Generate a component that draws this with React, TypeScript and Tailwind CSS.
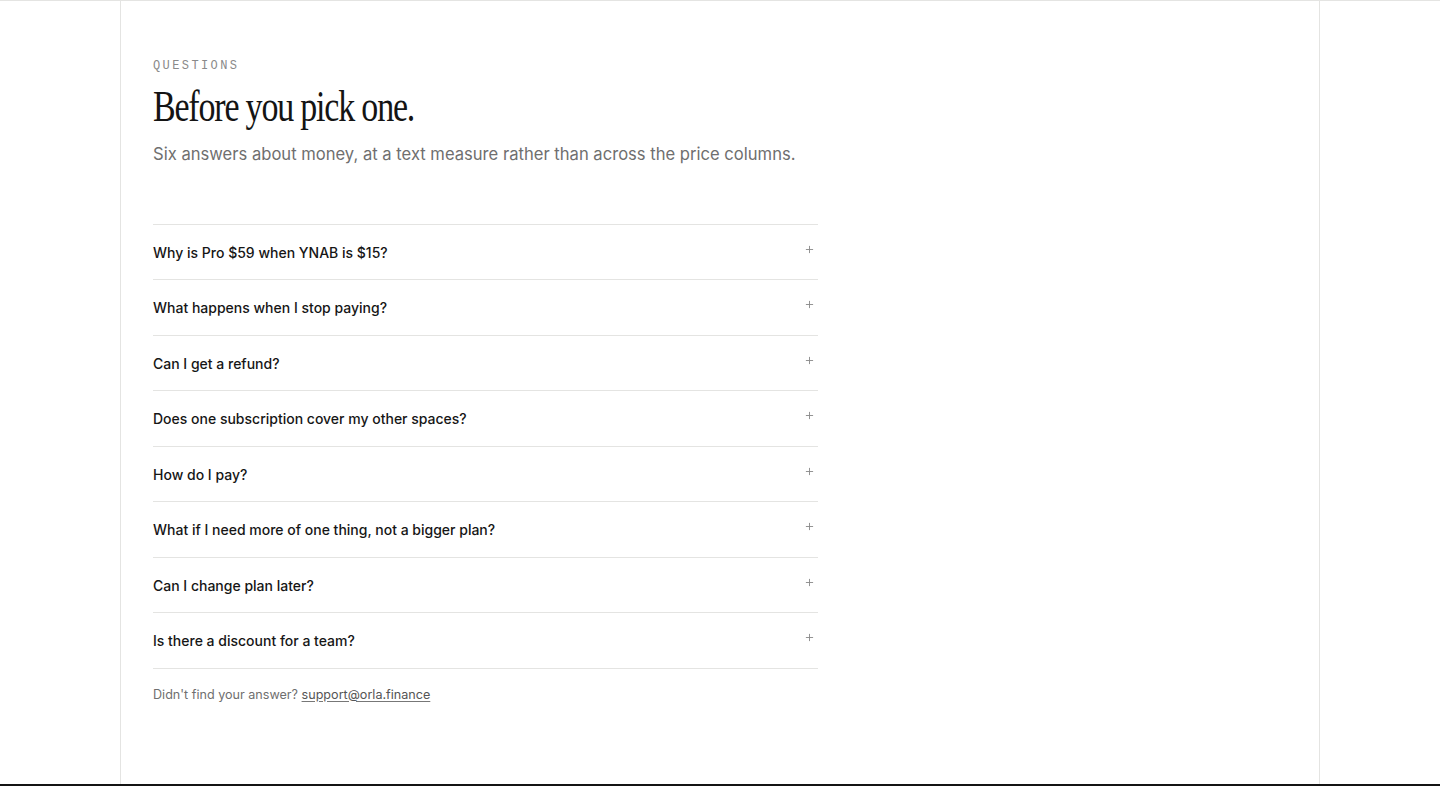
import { Plus } from "lucide-react";

const questions = [
  "Why is Pro $59 when YNAB is $15?",
  "What happens when I stop paying?",
  "Can I get a refund?",
  "Does one subscription cover my other spaces?",
  "How do I pay?",
  "What if I need more of one thing, not a bigger plan?",
  "Can I change plan later?",
  "Is there a discount for a team?",
];

const sans = "font-['Inter','Noto_Sans',sans-serif]";

const FaqRow = ({ q }: { q: string }) => (
  <li className="border-b border-[#e4e4e2]">
    <button className="flex h-[54.5px] w-full items-center justify-between text-left">
      <span className={`${sans} text-[14px] font-medium text-[#161616]`}>{q}</span>
      <Plus className="mr-[3px] -mt-[6px] size-[11px] text-[#8a8a8a]" strokeWidth={2} />
    </button>
  </li>
);

export default function App() {
  return (
    <div className="min-h-[786px] bg-white">
      <section className="border-t border-[#e4e4e2]">
        <div className="mx-auto w-[1200px] border-x border-[#e4e4e2] px-8 pt-[56px] pb-[79px]">
          {/* Header */}
          <p className="font-['Liberation_Mono',monospace] text-[12px] uppercase tracking-[0.2em] text-[#8a8a8a]">
            Questions
          </p>
          <h2 className="mt-[6px] origin-left scale-x-[0.755] font-['Liberation_Serif',serif] text-[45px] leading-[50px] tracking-[-0.035em] whitespace-nowrap text-[#141414]">
            Before you pick one.
          </h2>
          <p className={`${sans} mt-[11px] text-[16.6px] text-[#6f6f6f]`}>
            Six answers about money, at a text measure rather than across the price columns.
          </p>

          {/* Accordion */}
          <ul className="mt-[57px] w-[665px] border-t border-[#e4e4e2]">
            {questions.map((q) => (
              <FaqRow key={q} q={q} />
            ))}
          </ul>

          <p className={`${sans} mt-[17px] text-[12.6px] text-[#6f6f6f]`}>
            Didn't find your answer?{" "}
            <a href="#" className="text-[#555] underline decoration-[#777] underline-offset-2">
              support@orla.finance
            </a>
          </p>
        </div>
      </section>
      <div className="h-[2px] bg-[#141414]" />
    </div>
  );
}
